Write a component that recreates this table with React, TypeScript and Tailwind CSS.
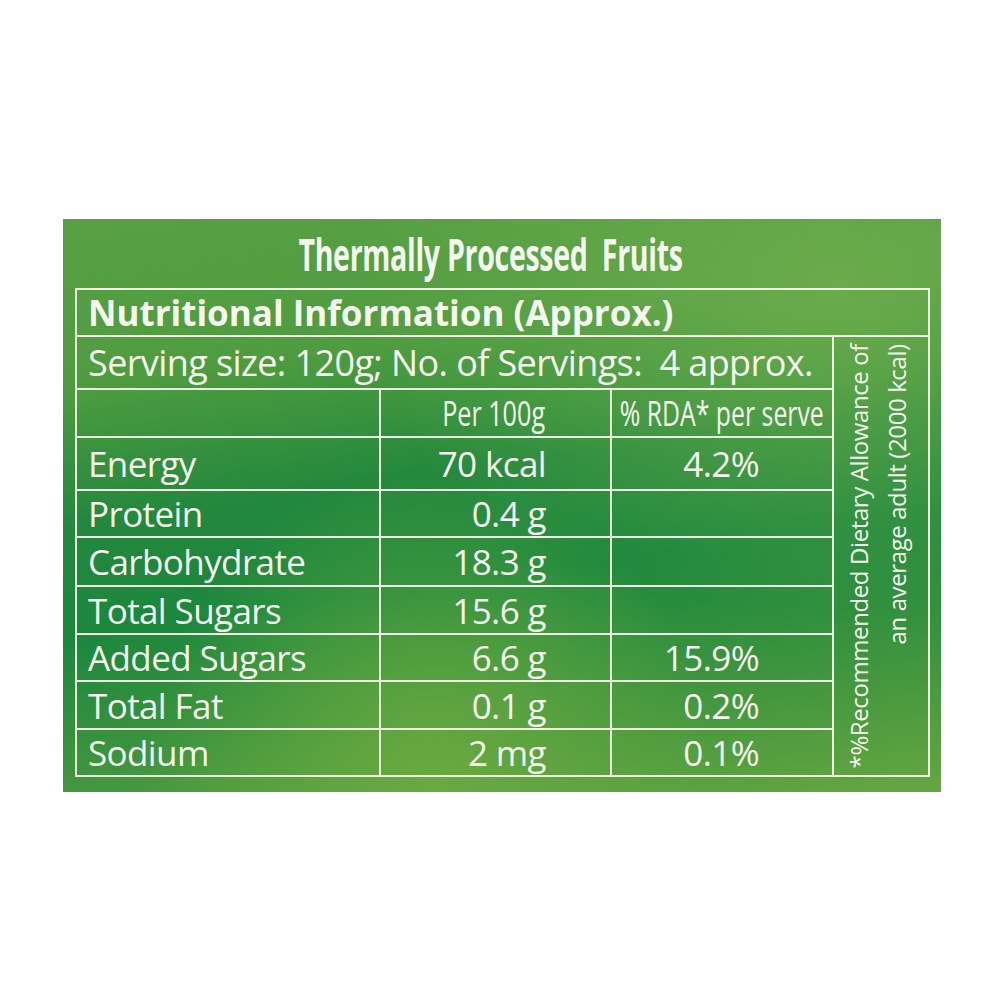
const rows = [
  { name: "Energy", per100: "70 kcal", rda: "4.2%", height: "h-[53px]" },
  { name: "Protein", per100: "0.4 g", rda: "", height: "h-[47px]" },
  { name: "Carbohydrate", per100: "18.3 g", rda: "", height: "h-[49px]" },
  { name: "Total Sugars", per100: "15.6 g", rda: "", height: "h-[48px]" },
  { name: "Added Sugars", per100: "6.6 g", rda: "15.9%", height: "h-[47px]" },
  { name: "Total Fat", per100: "0.1 g", rda: "0.2%", height: "h-[48px]" },
  { name: "Sodium", per100: "2 mg", rda: "0.1%", height: "h-[45px]" },
];

const body = "font-['Open_Sans','Noto_Sans',sans-serif]";

export default function App() {
  return (
    <div className="h-[1000px] w-[1000px] bg-white pt-[219px] pl-[63px]">
      <div className={`h-[573px] w-[878px] bg-[radial-gradient(ellipse_at_88%_12%,#6aab4b_0%,transparent_45%),radial-gradient(ellipse_at_42%_100%,#6aa940_0%,transparent_40%),linear-gradient(172deg,#58a043_0%,#4f9c40_24%,#23883d_44%,#1b873d_60%,#3f953e_80%,#66a640_100%)] text-[#f5f8ee] ${body}`}>
        <div className="flex h-[69px] items-center justify-center pr-[22px]">
          <h1 className="inline-block scale-x-[0.635] whitespace-nowrap text-[45px] font-bold leading-none tracking-[-0.5px]">
            Thermally Processed&nbsp; Fruits
          </h1>
        </div>

        <div className="ml-[12px] w-[855px] border-2 border-[#eef3e2]">
          <div className="flex h-[47px] items-center border-b-2 border-[#eef3e2] pl-[11px]">
            <span className="text-[35px] font-bold leading-none">
              Nutritional Information (Approx.)
            </span>
          </div>

          <div className="flex">
            <div className="w-[755px] shrink-0">
              <div className="flex h-[53px] items-center border-b-2 border-[#eef3e2] pl-[11px]">
                <span className="whitespace-nowrap text-[36px] leading-none tracking-[-0.6px]">
                  Serving size: 120g; No. of Servings:&nbsp; 4 approx.
                </span>
              </div>

              <div className="flex h-[48px] border-b-2 border-[#eef3e2]">
                <div className="w-[304px] shrink-0 border-r-2 border-[#eef3e2]" />
                <div className="flex w-[231px] shrink-0 items-center justify-end border-r-2 border-[#eef3e2] pr-[65px]">
                  <span className="inline-block origin-right scale-x-[0.74] whitespace-nowrap text-[34px] leading-none">
                    Per 100g
                  </span>
                </div>
                <div className="flex min-w-0 flex-1 items-center justify-center">
                  <span className="inline-block shrink-0 scale-x-[0.73] whitespace-nowrap text-[34px] leading-none">
                    % RDA* per serve
                  </span>
                </div>
              </div>

              {rows.map((row, index) => (
                <div
                  key={row.name}
                  className={`flex ${row.height} ${
                    index < rows.length - 1 ? "border-b-2 border-[#eef3e2]" : ""
                  }`}
                >
                  <div className="flex w-[304px] shrink-0 items-center border-r-2 border-[#eef3e2] pl-[11px]">
                    <span className="text-[35px] leading-none tracking-[-0.6px]">{row.name}</span>
                  </div>
                  <div className="flex w-[231px] shrink-0 items-center justify-end border-r-2 border-[#eef3e2] pr-[64px]">
                    <span className="text-[35px] leading-none tracking-[-0.6px]">{row.per100}</span>
                  </div>
                  <div className="flex min-w-0 flex-1 items-center justify-end pr-[73px]">
                    <span className="text-[35px] leading-none tracking-[-0.6px]">{row.rda}</span>
                  </div>
                </div>
              ))}
            </div>

            <div className="flex flex-1 items-center justify-center border-l-2 border-[#eef3e2] pr-[6px]">
              <p className="rotate-180 text-end text-[24px] leading-[38px] tracking-[-0.4px] [writing-mode:vertical-rl]">
                *%Recommended Dietary Allowance of
                <br />
                an average adult (2000 kcal)
              </p>
            </div>
          </div>
        </div>
      </div>
    </div>
  );
}
